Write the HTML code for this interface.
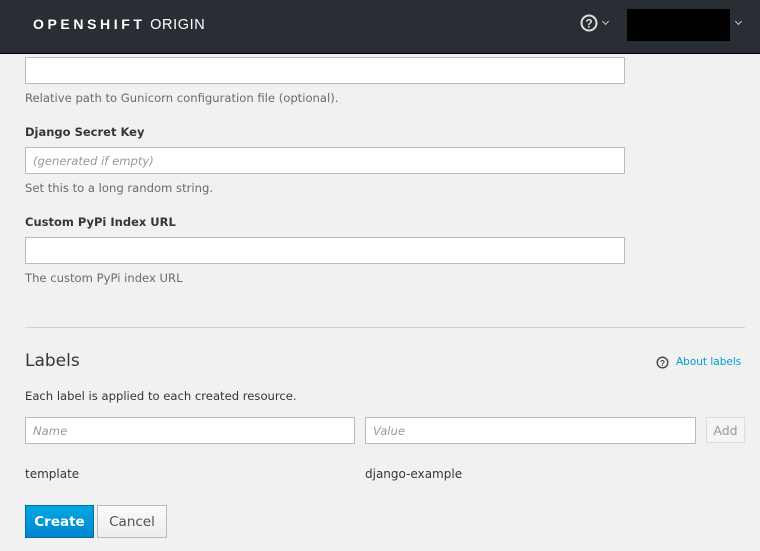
<!DOCTYPE html>
<html><head><style>
body{margin:0;width:760px;height:551px;overflow:hidden;background:#f1f1f1;font-family:"DejaVu Sans",sans-serif;color:#363636;font-size:11.6px;position:relative}
.hdr{position:absolute;left:0;top:0;width:760px;height:53px;background:#292e34;border-bottom:1px solid #000}
.a{position:absolute}
.inp{position:absolute;background:#fff;border:1px solid #bbb;box-sizing:border-box;height:27px}
.ph{color:#999;font-style:italic;font-size:11.6px;padding:6px 7px}
.help{color:#6b6b6b;font-size:11.6px}
.lbl{font-weight:bold;font-size:11.5px;color:#363636}
</style></head><body>
<div class="hdr">
<div class="a" style="left:33px;top:16px;color:#fff;font-family:'Liberation Sans',sans-serif;font-size:14px;font-weight:900;letter-spacing:3.6px">OPENSHIFT<span style="font-weight:normal;letter-spacing:0.6px;font-size:14.5px"> ORIGIN</span></div>
<svg class="a" style="left:580px;top:14px" width="18" height="18" viewBox="0 0 18 18"><circle cx="9" cy="9" r="7.5" fill="none" stroke="#ddd" stroke-width="2"/><text x="9" y="13.5" text-anchor="middle" font-family="Liberation Sans" font-weight="bold" font-size="12" fill="#ddd">?</text></svg>
<div class="a" style="left:603px;top:19px;width:4px;height:4px;border-right:1.5px solid #ccc;border-bottom:1.5px solid #ccc;transform:rotate(45deg)"></div>
<div class="a" style="left:627px;top:9px;width:103px;height:32px;background:#000"></div>
<div class="a" style="left:736px;top:19px;width:4px;height:4px;border-right:1.5px solid #ccc;border-bottom:1.5px solid #ccc;transform:rotate(45deg)"></div>
</div>
<div class="inp" style="left:25px;top:57px;width:600px"></div>
<div class="a help" style="left:25px;top:91px">Relative path to Gunicorn configuration file (optional).</div>
<div class="a lbl" style="left:25px;top:125px">Django Secret Key</div>
<div class="inp ph" style="left:25px;top:147px;width:600px">(generated if empty)</div>
<div class="a help" style="left:25px;top:181px">Set this to a long random string.</div>
<div class="a lbl" style="left:25px;top:215px">Custom PyPi Index URL</div>
<div class="inp" style="left:25px;top:237px;width:600px"></div>
<div class="a help" style="left:25px;top:271px">The custom PyPi index URL</div>
<div class="a" style="left:25px;top:327px;width:720px;height:1px;background:#d1d1d1"></div>
<div class="a" style="left:25px;top:351px;font-size:17px;color:#363636">Labels</div>
<svg class="a" style="left:656px;top:356px" width="13" height="13" viewBox="0 0 13 13"><circle cx="6.5" cy="6.5" r="5.3" fill="none" stroke="#444" stroke-width="1.4"/><text x="6.5" y="10" text-anchor="middle" font-family="Liberation Sans" font-weight="bold" font-size="8.5" fill="#444">?</text></svg>
<div class="a" style="left:676px;top:356px;color:#0099d3;font-size:10.5px">About labels</div>
<div class="a help" style="left:25px;top:389px;color:#363636">Each label is applied to each created resource.</div>
<div class="inp ph" style="left:25px;top:417px;width:330px">Name</div>
<div class="inp ph" style="left:365px;top:417px;width:331px">Value</div>
<div class="a" style="left:706px;top:417px;width:39px;height:26px;box-sizing:border-box;border:1px solid #ddd;background:#f5f5f5;color:#999;font-size:12.5px;text-align:center;line-height:25px">Add</div>
<div class="a" style="left:25px;top:467px;font-size:12px">template</div>
<div class="a" style="left:365px;top:467px;font-size:12px">django-example</div>
<div class="a" style="left:25px;top:505px;width:69px;height:33px;box-sizing:border-box;background:linear-gradient(#00a8e1,#0085cf);border:1px solid #006e9c;color:#fff;font-weight:bold;font-size:13.5px;text-align:center;line-height:33px">Create</div>
<div class="a" style="left:97px;top:505px;width:70px;height:33px;box-sizing:border-box;background:linear-gradient(#fafafa,#ededed);border:1px solid #bbb;color:#4d5258;font-size:13.5px;text-align:center;line-height:33px">Cancel</div>
</body></html>
